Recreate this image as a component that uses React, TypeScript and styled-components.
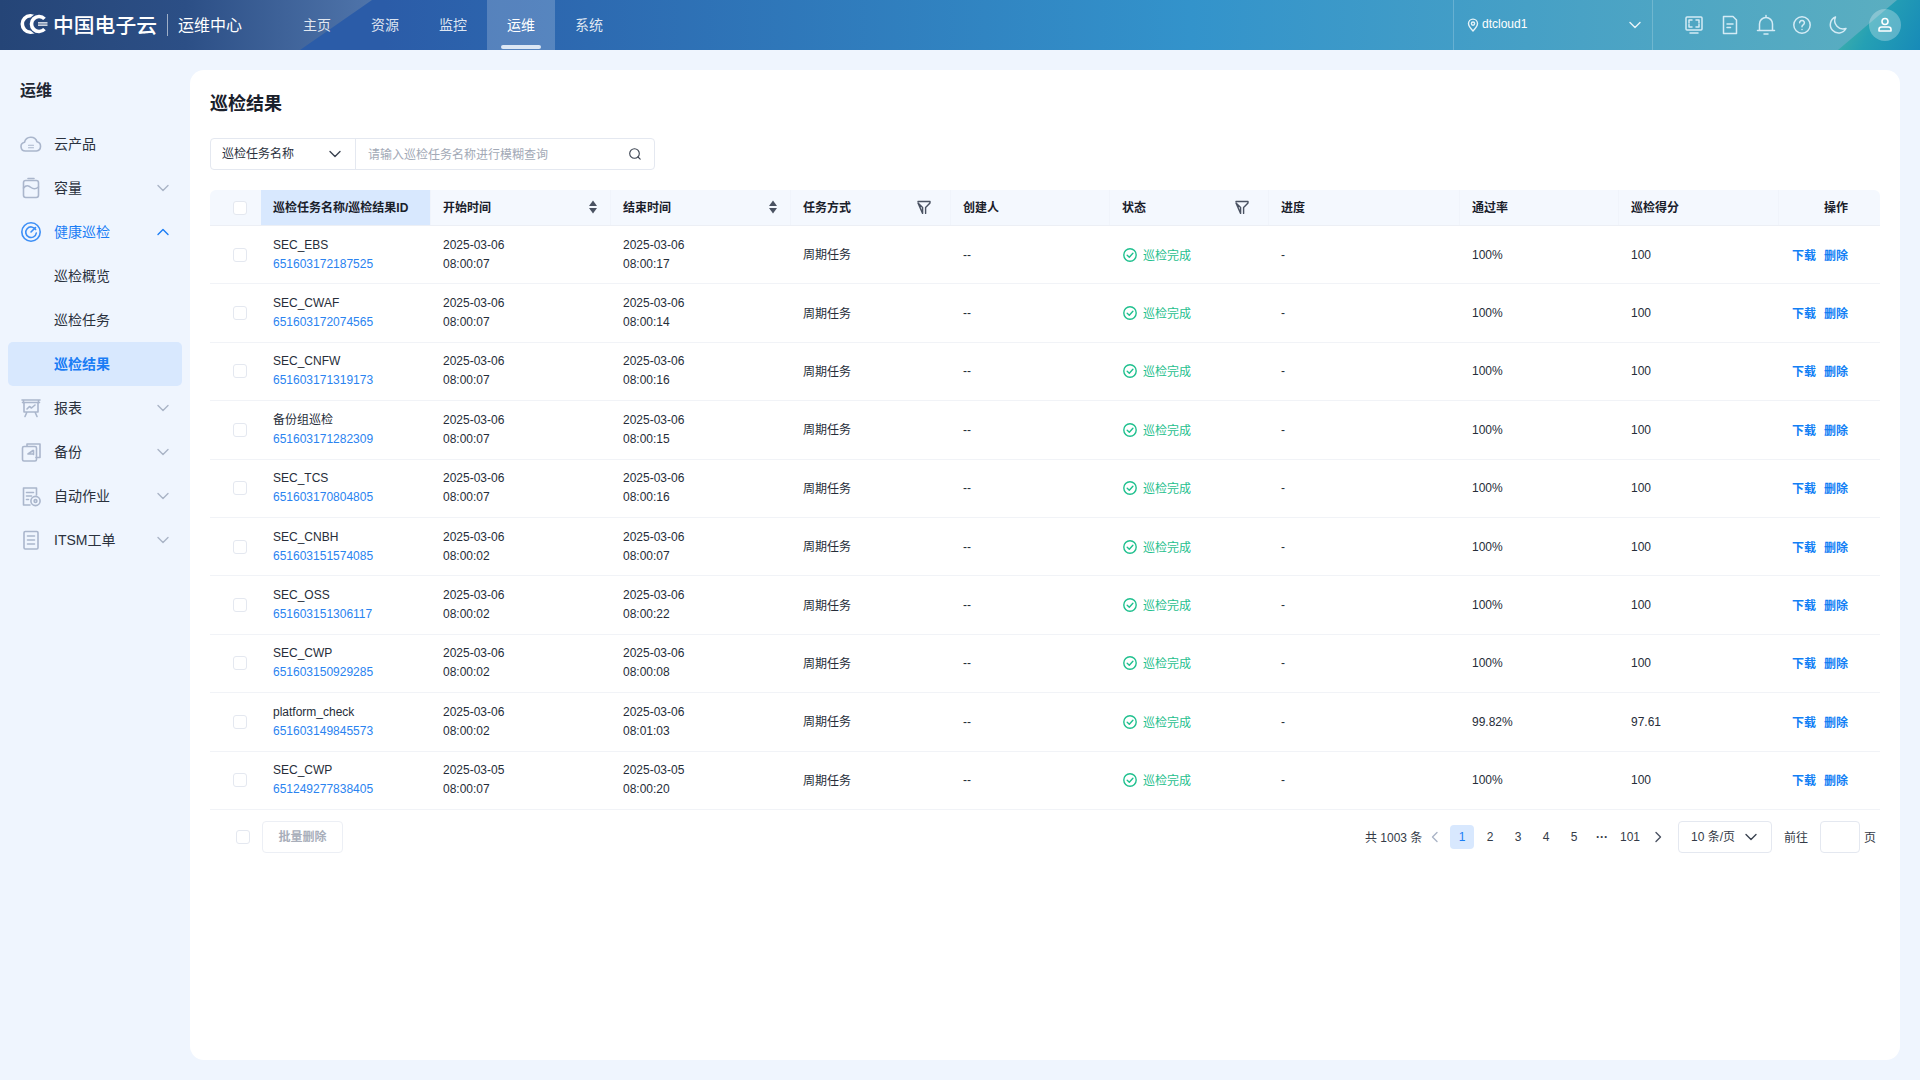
import React from 'react'
import styled, { createGlobalStyle } from 'styled-components'

const FONT = `"Liberation Sans", "Noto Sans CJK SC", sans-serif`
const COLUMNS = '51px 170px 180px 180px 160px 159px 159px 191px 159px 160px 101px'

const GlobalStyle = createGlobalStyle`
    html, body {
        margin: 0;
        padding: 0;
        background: #eff5fe;
        font-family: ${FONT};
        color: #1f2733;
    }
    * { box-sizing: border-box; }
`

const Page = styled.div`
    width: 1920px;
    height: 1080px;
    display: flex;
    flex-direction: column;
    overflow: hidden;
`

const TopBar = styled.header`
    position: relative;
    height: 50px;
    flex: none;
    display: flex;
    align-items: stretch;
    color: #fff;
    background: linear-gradient(90deg, #2b5ca8 0, #2b5ca8 20%, #3393cb 62%, #5cafc0 100%);
    &::before {
        content: '';
        position: absolute;
        left: 0;
        top: 0;
        width: 372px;
        height: 50px;
        background: linear-gradient(90deg, #254577 0, #2c4f86 50%, #4f74aa 100%);
        clip-path: polygon(0 0, 100% 0, 300px 100%, 0 100%);
    }
    &::after {
        content: '';
        position: absolute;
        right: 0;
        top: 0;
        width: 82px;
        height: 50px;
        background: linear-gradient(118deg, #4cb7a6 0, #25a0b4 45%, #178ab8 100%);
        clip-path: polygon(59px 0, 100% 0, 100% 100%, 0 100%);
    }
`

const Brand = styled.div`
    position: relative;
    z-index: 1;
    width: 283px;
    display: flex;
    align-items: center;
    padding: 0 0 2px 20px;
`

const BrandName = styled.span`
    margin-left: 5px;
    font-size: 20.8px;
    font-weight: 500;
    white-space: nowrap;
`

const BrandDivider = styled.i`
    width: 1px;
    height: 22px;
    margin: 2px 10px 0;
    background: rgba(255, 255, 255, 0.55);
`

const BrandSub = styled.span`
    font-size: 16px;
`

const Nav = styled.nav`
    position: relative;
    z-index: 1;
    display: flex;
    flex: 1;
`

const NavItem = styled.a<{ $active?: boolean }>`
    position: relative;
    width: 68px;
    display: flex;
    align-items: center;
    justify-content: center;
    padding-bottom: 2px;
    font-size: 14px;
    background: ${p => (p.$active ? 'rgba(255, 255, 255, 0.2)' : 'transparent')};
    color: ${p => (p.$active ? '#fff' : 'rgba(255, 255, 255, 0.85)')};
    ${p =>
        p.$active &&
        `&::after {
            content: '';
            position: absolute;
            left: 14px;
            right: 14px;
            bottom: 1px;
            height: 4px;
            border-radius: 2px;
            background: #dce7f5;
        }`}
`

const Region = styled.div`
    position: relative;
    z-index: 1;
    width: 200px;
    display: flex;
    align-items: center;
    padding: 0 10px 0 13px;
    border-left: 1px solid rgba(255, 255, 255, 0.2);
    border-right: 1px solid rgba(255, 255, 255, 0.2);
    font-size: 12px;
`

const RegionName = styled.span`
    flex: 1;
    margin-left: 3px;
    margin-top: -2px;
`

const Tools = styled.div`
    position: relative;
    z-index: 1;
    width: 267px;
    display: flex;
    align-items: center;
    padding-left: 29px;
    gap: 12px;
`

const ToolIcon = styled.svg`
    width: 24px;
    height: 24px;
    fill: none;
    stroke: #d4ebf5;
    stroke-width: 1.5;
    stroke-linecap: round;
    stroke-linejoin: round;
`

const Avatar = styled.div`
    width: 32px;
    height: 32px;
    margin-left: 7px;
    border-radius: 50%;
    background: rgba(255, 255, 255, 0.28);
    display: flex;
    align-items: center;
    justify-content: center;
`

const AvatarIcon = styled.svg`
    width: 20px;
    height: 20px;
    fill: none;
    stroke: #fff;
    stroke-width: 1.6;
    stroke-linecap: round;
    stroke-linejoin: round;
`

const Body = styled.div`
    flex: 1;
    display: flex;
    min-height: 0;
`

const Sidebar = styled.aside`
    width: 190px;
    flex: none;
    padding: 0 8px;
`

const SideTitle = styled.h2`
    margin: 0 0 0 12px;
    height: 72px;
    line-height: 81px;
    font-size: 16px;
    font-weight: 700;
    color: #1f2733;
`

const MenuItem = styled.div<{ $open?: boolean; $selected?: boolean; $sub?: boolean }>`
    height: 44px;
    display: flex;
    align-items: center;
    padding: ${p => (p.$sub ? '0 0 2px 46px' : '0 0 0 12px')};
    border-radius: 5px;
    font-size: 14px;
    font-weight: ${p => (p.$selected ? 700 : 400)};
    color: ${p => (p.$open || p.$selected ? '#1b7df5' : '#2a313d')};
    background: ${p => (p.$selected ? '#d8e8fe' : 'transparent')};
`

const MenuLabel = styled.span`
    flex: 1;
    margin: 0 0 2px 12px;
`

const MenuChevron = styled.svg<{ $open?: boolean }>`
    width: 14px;
    height: 14px;
    margin-right: 12px;
    fill: none;
    stroke: ${p => (p.$open ? '#1b7df5' : '#aab4c6')};
    stroke-width: 1.4;
    stroke-linecap: round;
    stroke-linejoin: round;
`

const MenuIcon = styled.svg<{ $open?: boolean }>`
    width: 22px;
    height: 22px;
    flex: none;
    fill: none;
    stroke: ${p => (p.$open ? '#3d8ff6' : '#aab6cc')};
    stroke-width: 1.6;
    stroke-linecap: round;
    stroke-linejoin: round;
`

const Main = styled.main`
    flex: 1;
    padding: 20px 20px 20px 0;
    min-width: 0;
`

const Card = styled.section`
    height: 100%;
    background: #fff;
    border-radius: 14px;
    padding: 22px 20px 0;
`

const Title = styled.h1`
    margin: 0 0 22px;
    height: 24px;
    line-height: 25px;
    font-size: 18px;
    font-weight: 700;
    color: #1a202b;
`

const Filter = styled.div`
    width: 445px;
    height: 32px;
    display: flex;
    border: 1px solid #e4e8f0;
    border-radius: 4px;
    margin-bottom: 20px;
`

const FilterSelect = styled.div`
    width: 145px;
    display: flex;
    align-items: center;
    justify-content: space-between;
    padding: 0 13px 0 11px;
    border-right: 1px solid #e4e8f0;
    font-size: 12px;
    color: #2a313d;
`

const FilterLabel = styled.span`
    margin-bottom: 4px;
`

const FilterInput = styled.div`
    flex: 1;
    display: flex;
    align-items: center;
    justify-content: space-between;
    padding: 0 12px;
    font-size: 12px;
    color: #a2a9b6;
`

const Placeholder = styled.span`
    margin-bottom: 1px;
`

const Line = styled.svg<{ $color?: string; $stroke?: number }>`
    fill: none;
    stroke: ${p => p.$color || '#3a4250'};
    stroke-width: ${p => p.$stroke || 1.4};
    stroke-linecap: round;
    stroke-linejoin: round;
    flex: none;
`

const HeadRow = styled.div`
    display: grid;
    grid-template-columns: ${COLUMNS};
    height: 36px;
    background: #f4f8fe;
    border-bottom: 1px solid #eceff5;
    border-radius: 6px 6px 0 0;
    font-size: 12px;
    font-weight: 700;
    color: #1a202b;
`

const HeadCell = styled.div<{ $sorted?: boolean; $right?: boolean }>`
    display: flex;
    align-items: center;
    justify-content: ${p => (p.$right ? 'flex-end' : 'space-between')};
    padding: 0 ${p => (p.$right ? '32px' : '12px')} 2px 12px;
    background: ${p => (p.$sorted ? '#d8e8fe' : 'transparent')};
    border-right: 1px solid #f0f4fb;
    &:last-child { border-right: 0; }
`

const CheckCell = styled.div`
    display: flex;
    align-items: center;
    justify-content: center;
    padding-left: 9px;
`

const Box = styled.span`
    display: block;
    width: 14px;
    height: 14px;
    border: 1px solid #e4e8f0;
    border-radius: 3px;
    background: #fff;
`

const Row = styled.div`
    display: grid;
    grid-template-columns: ${COLUMNS};
    height: 58.4px;
    border-bottom: 1px solid #f1f3f7;
    font-size: 12px;
    color: #262d39;
`

const Cell = styled.div<{ $right?: boolean }>`
    display: flex;
    align-items: center;
    gap: 8px;
    padding: 0 ${p => (p.$right ? '32px' : '12px')} 0 12px;
    justify-content: ${p => (p.$right ? 'flex-end' : 'flex-start')};
`

const Stack = styled.div`
    line-height: 19px;
`

const IdLink = styled.div`
    color: #2a83f0;
`

const Mode = styled.span`
    margin-bottom: 2px;
`

const Done = styled.span`
    display: flex;
    align-items: center;
    gap: 6px;
    margin-left: 1px;
    color: #1fc08e;
`

const DoneLabel = styled.span`
    margin-bottom: 1px;
`

const OpLink = styled.a`
    margin-bottom: 1px;
    color: #127ff5;
    font-weight: 700;
`

const Footer = styled.div`
    display: flex;
    align-items: center;
    height: 32px;
    margin-top: 11px;
    padding-left: 26px;
    font-size: 12px;
`

const BatchButton = styled.button`
    width: 81px;
    height: 32px;
    margin-left: 12px;
    padding: 0 0 2px;
    border: 1px solid #eceff5;
    border-radius: 4px;
    background: #fff;
    font-family: ${FONT};
    font-size: 12px;
    font-weight: 700;
    color: #a8aeba;
`

const Pager = styled.div`
    margin-left: auto;
    margin-right: 4px;
    display: flex;
    align-items: center;
    color: #343b48;
`

const Total = styled.span`
    width: 58px;
    white-space: nowrap;
`

const PagerArrow = styled.span<{ $gap?: number }>`
    width: 24px;
    margin-right: ${p => p.$gap || 0}px;
    display: flex;
    justify-content: center;
`

const PageNum = styled.span<{ $current?: boolean }>`
    width: 24px;
    height: 24px;
    margin-right: 4px;
    display: flex;
    align-items: center;
    justify-content: center;
    border-radius: 4px;
    background: ${p => (p.$current ? '#d8e8fe' : 'transparent')};
    color: ${p => (p.$current ? '#1b7df5' : '#343b48')};
`

const SizeSelect = styled.div`
    width: 94px;
    height: 32px;
    margin-left: 8px;
    display: flex;
    align-items: center;
    justify-content: space-between;
    padding: 0 13px 0 12px;
    border: 1px solid #e4e8f0;
    border-radius: 4px;
`

const SizeLabel = styled.span`
    margin-bottom: 3px;
`

const GotoLabel = styled.span`
    margin: 0 12px;
`

const GotoInput = styled.div`
    width: 40px;
    height: 32px;
    margin-right: 4px;
    border: 1px solid #e4e8f0;
    border-radius: 4px;
`

const Chevron = ({ size = 14, color }: { size?: number; color?: string }) => (
    <Line width={size} height={size} viewBox="0 0 14 14" $color={color}>
        <path d="M2 4.5 7 9.5 12 4.5" />
    </Line>
)

const SortIcon = () => (
    <svg width="10" height="16" viewBox="0 0 10 16">
        <path d="M5 1.500 9 7H1z" fill="#4a5262" />
        <path d="M5 14.500 9 9H1z" fill="#4a5262" />
    </svg>
)

const FilterGlyph = styled(Line)`
    margin-right: 7px;
`

const FilterIcon = () => (
    <FilterGlyph width="14" height="14" viewBox="0 0 14 14" $color="#4a5262">
        <path d="M1 1.500h12v1.400L8.600 7.400v6M5.600 13.400V7.400L1 2.900z" />
    </FilterGlyph>
)

const CheckIcon = () => (
    <Line width="14" height="14" viewBox="0 0 14 14" $color="#1fc08e">
        <circle cx="7" cy="7" r="6.200" />
        <path d="M4.200 7.200 6.300 9.200 9.900 5.200" />
    </Line>
)

const Logo = () => (
    <svg width="28" height="20" viewBox="0 0 28 20" fill="none" strokeLinecap="butt">
        <path d="M16 3.900A8.200 8.200 0 1 0 16 16.100" stroke="#fff" strokeWidth="3.600" />
        <path d="M24.500 4.900A7.500 7.500 0 1 0 24.500 15.100" stroke="#28497f" strokeWidth="6" />
        <path d="M24.500 4.900A7.500 7.500 0 1 0 24.500 15.100" stroke="#fff" strokeWidth="3.600" />
        <path d="M18 8.800h9.500M18 11.200h9.500" stroke="#fff" strokeWidth="1.200" />
    </svg>
)

const sideIcons: { [key: string]: React.ReactNode } = {
    cloud: (
        <>
            <path d="M5.500 18a4.400 4.400 0 0 1-1-8.700A6.500 6.500 0 0 1 17 8.800 4.700 4.700 0 0 1 16.500 18z" />
            <path d="M8.500 12.200h5M8.500 14.800h5" strokeWidth="1.100" />
        </>
    ),
    capacity: (
        <>
            <rect x="3.500" y="3.500" width="15" height="17" rx="2.200" />
            <path d="M8 1.500h6M3.500 11c3-3.500 5-2.500 7.500-.5s4.500 2 7.500-.5" />
        </>
    ),
    health: (
        <>
            <circle cx="11" cy="11" r="9.200" />
            <path d="M15.600 8.500A5.300 5.300 0 1 0 16.300 12" />
            <path d="M11 11 15.500 6.500" />
        </>
    ),
    report: (
        <>
            <path d="M2 3h18M3.500 3v3M18.500 3v3M4 5.500v9.500h14V5.500M2.500 5.500h17M7 15l-2 4.500M15 15l2 4.500" />
            <path d="M7 12l2.500-2.500 2 1.500 3.500-3" />
        </>
    ),
    backup: (
        <>
            <path d="M7 5V3h13v13.500h-4" />
            <rect x="2.500" y="5.500" width="14" height="14.500" rx="1.500" />
            <path d="M13 9.500 8 13l5 0M13.500 9.500v4" />
        </>
    ),
    job: (
        <>
            <path d="M10 20H3.500V3H16.500V10" />
            <path d="M6.500 7.500h7M6.500 11h5M6.500 14.500h2" />
            <circle cx="15.500" cy="16" r="4.600" />
            <circle cx="15.500" cy="16" r="1.400" />
        </>
    ),
    itsm: (
        <>
            <rect x="4" y="2.500" width="14" height="17.500" rx="1.200" />
            <path d="M7.500 7h7M7.500 11h7M7.500 15h7" />
        </>
    )
}

const menuBefore = [
    { icon: 'cloud', label: '云产品', arrow: false },
    { icon: 'capacity', label: '容量', arrow: true }
]

const menuAfter = [
    { icon: 'report', label: '报表' },
    { icon: 'backup', label: '备份' },
    { icon: 'job', label: '自动作业' },
    { icon: 'itsm', label: 'ITSM工单' }
]

const rows = [
    ['SEC_EBS', '651603172187525', '2025-03-06', '08:00:07', '2025-03-06', '08:00:17', '100%', '100'],
    ['SEC_CWAF', '651603172074565', '2025-03-06', '08:00:07', '2025-03-06', '08:00:14', '100%', '100'],
    ['SEC_CNFW', '651603171319173', '2025-03-06', '08:00:07', '2025-03-06', '08:00:16', '100%', '100'],
    ['备份组巡检', '651603171282309', '2025-03-06', '08:00:07', '2025-03-06', '08:00:15', '100%', '100'],
    ['SEC_TCS', '651603170804805', '2025-03-06', '08:00:07', '2025-03-06', '08:00:16', '100%', '100'],
    ['SEC_CNBH', '651603151574085', '2025-03-06', '08:00:02', '2025-03-06', '08:00:07', '100%', '100'],
    ['SEC_OSS', '651603151306117', '2025-03-06', '08:00:02', '2025-03-06', '08:00:22', '100%', '100'],
    ['SEC_CWP', '651603150929285', '2025-03-06', '08:00:02', '2025-03-06', '08:00:08', '100%', '100'],
    ['platform_check', '651603149845573', '2025-03-06', '08:00:02', '2025-03-06', '08:01:03', '99.82%', '97.61'],
    ['SEC_CWP', '651249277838405', '2025-03-05', '08:00:07', '2025-03-05', '08:00:20', '100%', '100']
]

export default function App() {
    return (
        <Page>
            <GlobalStyle />
            <TopBar>
                <Brand>
                    <Logo />
                    <BrandName>中国电子云</BrandName>
                    <BrandDivider />
                    <BrandSub>运维中心</BrandSub>
                </Brand>
                <Nav>
                    <NavItem>主页</NavItem>
                    <NavItem>资源</NavItem>
                    <NavItem>监控</NavItem>
                    <NavItem $active>运维</NavItem>
                    <NavItem>系统</NavItem>
                </Nav>
                <Region>
                    <Line width="12" height="14" viewBox="0 0 12 14" $color="#e6f3f8">
                        <path d="M6 13C3 10 1.500 8 1.500 5.600a4.500 4.500 0 0 1 9 0C10.500 8 9 10 6 13z" />
                        <circle cx="6" cy="5.600" r="1.600" />
                    </Line>
                    <RegionName>dtcloud1</RegionName>
                    <Chevron size={14} color="#eaf5f9" />
                </Region>
                <Tools>
                    <ToolIcon viewBox="0 0 24 24">
                        <rect x="4" y="4" width="16" height="13" rx="1" />
                        <path d="M7 10V7h3M14 7h3v3M17 11.500v2.500h-3M10 14H7v-2.500M8 20h8" />
                    </ToolIcon>
                    <ToolIcon viewBox="0 0 24 24">
                        <path d="M5.500 3.500h9.500l3.500 3.500v13.500h-13z" />
                        <path d="M9 11h6M9 14.500h3.500" />
                    </ToolIcon>
                    <ToolIcon viewBox="0 0 24 24">
                        <path d="M5.500 17.500V11a6.500 6.500 0 0 1 13 0v6.500M3.500 17.500h17M12 2.500v2M10 21h4" />
                    </ToolIcon>
                    <ToolIcon viewBox="0 0 24 24">
                        <circle cx="12" cy="12" r="8.200" />
                        <path d="M9.600 9.800a2.400 2.400 0 1 1 3.600 2.100c-.8.500-1.200 1-1.200 1.900M12 16.400v.1" />
                    </ToolIcon>
                    <ToolIcon viewBox="0 0 24 24">
                        <path d="M9.500 4A8.300 8.300 0 1 0 20 15.500 8.500 8.500 0 0 1 9.500 4z" />
                    </ToolIcon>
                    <Avatar>
                        <AvatarIcon viewBox="0 0 20 20">
                            <circle cx="10" cy="6.500" r="3" />
                            <path d="M4 16v-1.500a2.500 2.500 0 0 1 2.500-2.500h7a2.500 2.500 0 0 1 2.500 2.500V16z" />
                        </AvatarIcon>
                    </Avatar>
                </Tools>
            </TopBar>
            <Body>
                <Sidebar>
                    <SideTitle>运维</SideTitle>
                    {menuBefore.map(m => (
                        <MenuItem key={m.label}>
                            <MenuIcon viewBox="0 0 22 22">{sideIcons[m.icon]}</MenuIcon>
                            <MenuLabel>{m.label}</MenuLabel>
                            {m.arrow && (
                                <MenuChevron viewBox="0 0 14 14">
                                    <path d="M2 4.500 7 9.500 12 4.500" />
                                </MenuChevron>
                            )}
                        </MenuItem>
                    ))}
                    <MenuItem $open>
                        <MenuIcon viewBox="0 0 22 22" $open>
                            {sideIcons.health}
                        </MenuIcon>
                        <MenuLabel>健康巡检</MenuLabel>
                        <MenuChevron viewBox="0 0 14 14" $open>
                            <path d="M2 9.500 7 4.500 12 9.500" />
                        </MenuChevron>
                    </MenuItem>
                    <MenuItem $sub>巡检概览</MenuItem>
                    <MenuItem $sub>巡检任务</MenuItem>
                    <MenuItem $sub $selected>
                        巡检结果
                    </MenuItem>
                    {menuAfter.map(m => (
                        <MenuItem key={m.label}>
                            <MenuIcon viewBox="0 0 22 22">{sideIcons[m.icon]}</MenuIcon>
                            <MenuLabel>{m.label}</MenuLabel>
                            <MenuChevron viewBox="0 0 14 14">
                                <path d="M2 4.500 7 9.500 12 4.500" />
                            </MenuChevron>
                        </MenuItem>
                    ))}
                </Sidebar>
                <Main>
                    <Card>
                        <Title>巡检结果</Title>
                        <Filter>
                            <FilterSelect>
                                <FilterLabel>巡检任务名称</FilterLabel>
                                <Chevron size={14} />
                            </FilterSelect>
                            <FilterInput>
                                <Placeholder>请输入巡检任务名称进行模糊查询</Placeholder>
                                <Line width="14" height="14" viewBox="0 0 14 14" $stroke={1.1}>
                                    <circle cx="6.500" cy="6.500" r="4.800" />
                                    <path d="M10 10l2.200 2.200" />
                                </Line>
                            </FilterInput>
                        </Filter>
                        <HeadRow>
                            <CheckCell>
                                <Box />
                            </CheckCell>
                            <HeadCell $sorted>巡检任务名称/巡检结果ID</HeadCell>
                            <HeadCell>
                                开始时间
                                <SortIcon />
                            </HeadCell>
                            <HeadCell>
                                结束时间
                                <SortIcon />
                            </HeadCell>
                            <HeadCell>
                                任务方式
                                <FilterIcon />
                            </HeadCell>
                            <HeadCell>创建人</HeadCell>
                            <HeadCell>
                                状态
                                <FilterIcon />
                            </HeadCell>
                            <HeadCell>进度</HeadCell>
                            <HeadCell>通过率</HeadCell>
                            <HeadCell>巡检得分</HeadCell>
                            <HeadCell $right>操作</HeadCell>
                        </HeadRow>
                        {rows.map(r => (
                            <Row key={r[1]}>
                                <CheckCell>
                                    <Box />
                                </CheckCell>
                                <Cell>
                                    <Stack>
                                        <div>{r[0]}</div>
                                        <IdLink>{r[1]}</IdLink>
                                    </Stack>
                                </Cell>
                                <Cell>
                                    <Stack>
                                        <div>{r[2]}</div>
                                        <div>{r[3]}</div>
                                    </Stack>
                                </Cell>
                                <Cell>
                                    <Stack>
                                        <div>{r[4]}</div>
                                        <div>{r[5]}</div>
                                    </Stack>
                                </Cell>
                                <Cell>
                                    <Mode>周期任务</Mode>
                                </Cell>
                                <Cell>--</Cell>
                                <Cell>
                                    <Done>
                                        <CheckIcon />
                                        <DoneLabel>巡检完成</DoneLabel>
                                    </Done>
                                </Cell>
                                <Cell>-</Cell>
                                <Cell>{r[6]}</Cell>
                                <Cell>{r[7]}</Cell>
                                <Cell $right>
                                    <OpLink>下载</OpLink>
                                    <OpLink>删除</OpLink>
                                </Cell>
                            </Row>
                        ))}
                        <Footer>
                            <Box />
                            <BatchButton>批量删除</BatchButton>
                            <Pager>
                                <Total>共 1003 条</Total>
                                <PagerArrow $gap={3}>
                                    <Line width="10" height="12" viewBox="0 0 10 12" $color="#aab4c6">
                                        <path d="M7 1.500 2.500 6 7 10.500" />
                                    </Line>
                                </PagerArrow>
                                <PageNum $current>1</PageNum>
                                <PageNum>2</PageNum>
                                <PageNum>3</PageNum>
                                <PageNum>4</PageNum>
                                <PageNum>5</PageNum>
                                <PageNum>
                                    <strong>···</strong>
                                </PageNum>
                                <PageNum>101</PageNum>
                                <PagerArrow>
                                    <Line width="10" height="12" viewBox="0 0 10 12" $color="#4a5262">
                                        <path d="M3 1.500 7.500 6 3 10.500" />
                                    </Line>
                                </PagerArrow>
                                <SizeSelect>
                                    <SizeLabel>10 条/页</SizeLabel>
                                    <Chevron size={14} />
                                </SizeSelect>
                                <GotoLabel>前往</GotoLabel>
                                <GotoInput />
                                页
                            </Pager>
                        </Footer>
                    </Card>
                </Main>
            </Body>
        </Page>
    )
}
